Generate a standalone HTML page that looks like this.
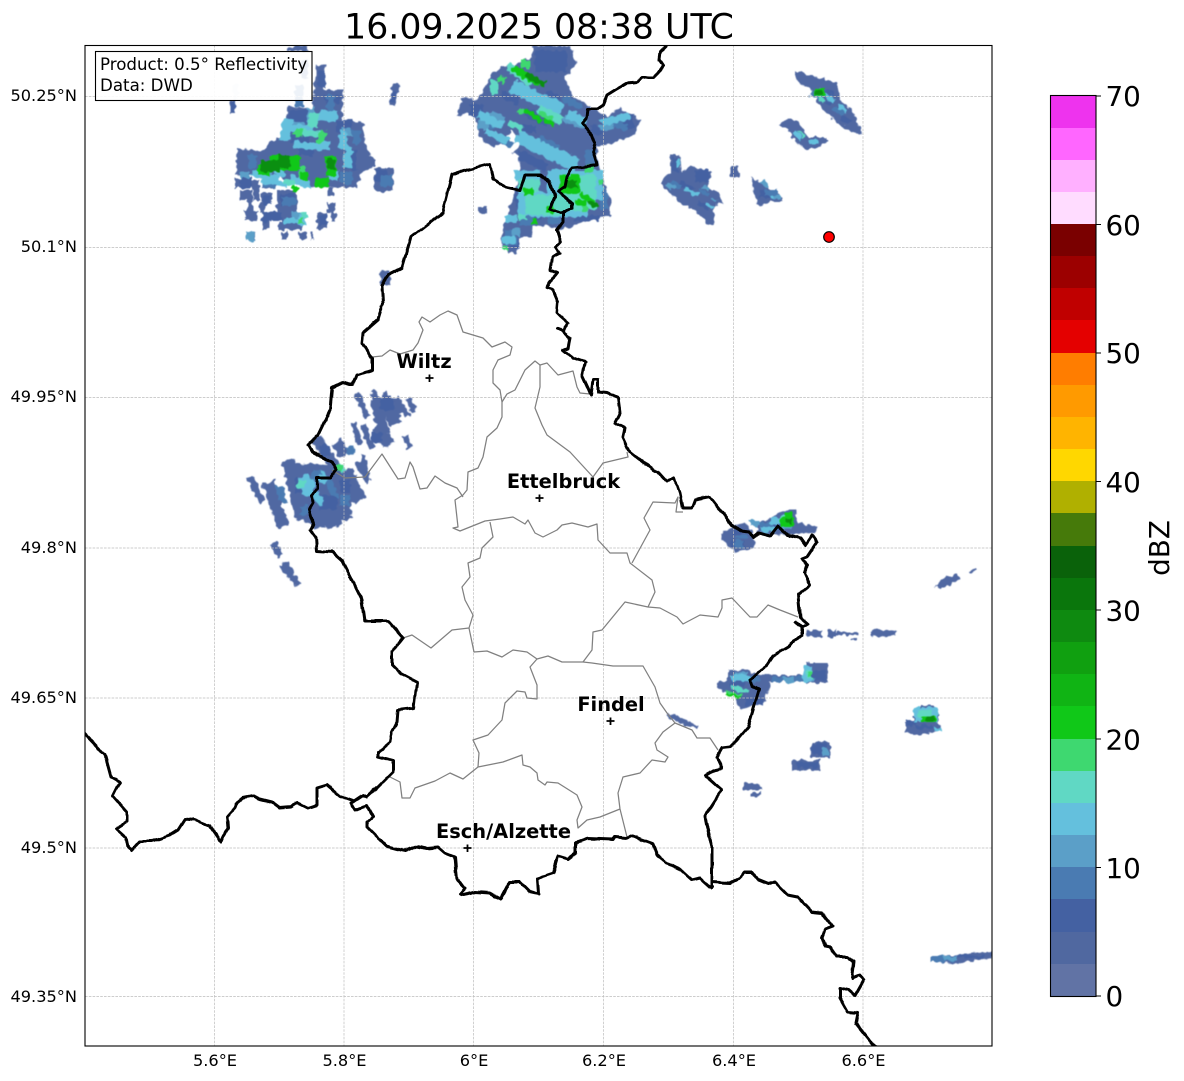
<!DOCTYPE html>
<html><head><meta charset="utf-8"><title>Radar</title>
<style>
html,body{margin:0;padding:0;background:#fff}
svg{display:block}
text{font-family:"DejaVu Sans",sans-serif;fill:#000}
.t{font-size:16.67px}
.y{font-size:16.2px}
.c{font-size:27.8px}
.b{font-size:19.4px;font-weight:bold;text-anchor:middle}
.k{fill:none;stroke:#000;stroke-width:3;stroke-linejoin:round;stroke-linecap:round}
.g{fill:none;stroke:#808080;stroke-width:1.25;stroke-linejoin:round}
.s{fill:none;stroke-linecap:butt}
</style></head><body>
<svg width="1184" height="1081" viewBox="0 0 1184 1081" xmlns="http://www.w3.org/2000/svg">
<defs><clipPath id="m"><rect x="85" y="45" width="907" height="1001"/></clipPath>
<filter id="j" filterUnits="userSpaceOnUse" x="0" y="0" width="1184" height="1081" color-interpolation-filters="sRGB">
<feTurbulence type="fractalNoise" baseFrequency="0.22" numOctaves="1" seed="4" result="n"/>
<feDisplacementMap in="SourceGraphic" in2="n" scale="7" xChannelSelector="R" yChannelSelector="G"/>
<feGaussianBlur stdDeviation="0.4"/>
</filter>
<filter id="w" filterUnits="userSpaceOnUse" x="0" y="0" width="1184" height="1081" color-interpolation-filters="sRGB">
<feTurbulence type="fractalNoise" baseFrequency="0.09" numOctaves="1" seed="7" result="n"/>
<feDisplacementMap in="SourceGraphic" in2="n" scale="4" xChannelSelector="R" yChannelSelector="G"/>
<feGaussianBlur stdDeviation="0.35"/>
</filter>
</defs>
<rect width="1184" height="1081" fill="#fff"/>
<g clip-path="url(#m)">
<!-- radar base -->
<g filter="url(#j)">
<g fill="#5068a2">
<path d="M288 46h20v5h-20zM288 107L312 108 316 65 325 66 323 90 343 90 342 120 362 122 367 150 376 160 376 166 362 172 356 188 335 188 308 186 265 172 236 176 237 148 262 152 270 142 283 135Z"/>
<path d="M235 178h10v10h-10zM240 190h12v10h-12zM252 180h7v10h-7zM253 190h7v10h-7zM262 182h13v7h-13zM262 192h10v10h-10zM248 200h5v10h-5zM245 210h12v10h-12zM260 202h5v10h-5zM262 212h8v10h-8zM263 222h5v8h-5zM272 212h10v8h-10zM277 190h20v22h-20zM282 212h22v10h-22zM278 222h24v8h-24zM282 232h5v8h-5zM299 232h7v8h-7zM311 232h2v8h-2zM317 213h10v16h-10zM327 203h8v10h-8zM331 213h5v8h-5zM328 188h5v8h-5zM375 168h18v23h-18zM380 270h10v15h-10z"/>
<path d="M393 83l7 2-5 22-6-2zM230 100h5v13h-5z"/>
<path d="M532 46L570 46 577 63 565 78 573 97 588 105 607 117 620 108 640 120 635 135 613 143 597 147 598 163 610 200 610 215 583 222 570 228 557 228 540 225 533 227 532 237 520 237 517 253 508 253 502 243 503 228 508 213 513 198 518 180 520 157 512 153 522 143 512 130 503 143 492 147 480 137 475 117 467 112 457 117 462 98 477 100 493 73 502 67 513 65 532 57Z"/>
<path d="M478 207h8v7h-8zM485 207h2v6h-2z"/>
<path d="M670 155L680 155 682 173 690 165 712 173 707 187 717 192 723 203 714 205 715 225 707 223 697 212 680 203 660 183 670 173ZM730 167h9v10h-9z"/>
<path d="M750 178L762 183 783 197 783 202 770 202 758 206 755 195Z"/>
<path d="M795 70L817 77 837 83 840 100 852 110 862 133 857 135 837 123 820 107 812 90 797 82Z"/>
<path d="M778 125L787 118 798 122 808 137 827 137 827 142 808 150 797 143 788 130Z"/>
<path d="M720 533L745 523 752 530 755 545 752 549 735 552 722 540Z"/>
<path d="M757 523L787 510 795 510 798 523 818 527 813 533 778 535 757 533Z"/>
<path d="M807 630h15v7h-15zM828 630h8v7h-8zM835 632h23v3h-23zM850 638h7v2h-7zM870 631l15-2 13 2-2 4-12 2-14-1z"/>
<path d="M728 670L745 669 760 675 770 683 765 703 740 709 735 697 717 688 717 683 728 680Z"/>
<path d="M757 675h50v7h-50zM807 663h21v20h-21z"/>
<path d="M905 722h8v-6h8v-10h12l6 8v10l3 5-10 4-18 2-9-3z"/>
<path d="M811 742h19v15h-19zM792 760h28v10h-28zM743 783h14l5 4v3h-19zM751 793h10v3h-10z"/>
<path d="M665 715L668 713 698 725 697 728 685 726Z"/>
<path d="M935 586L942 578 958 574 960 578 950 586 942 588ZM970 571l5-3 2 2-5 3z"/>
<path d="M930 957L955 955 992 951 992 958 955 964 930 961Z"/>
<path d="M285 462L340 466 362 485 352 505 322 528 304 522 290 492Z"/>
<path d="M372 396L396 398 408 412 392 416 376 420Z"/>
</g>
<g class="s" stroke="#5068a2">
<path stroke-width="7" d="M250 477L263 503M273 543L280 556M284 562L297 585"/>
<path stroke-width="3" d="M280 565L290 578"/>
<path stroke-width="12" d="M268 482L283 527M303 465L320 528"/>
<path stroke-width="13" d="M288 460L302 520"/>
<path stroke-width="16" d="M316 480L335 527M330 472L345 520M345 470L355 503"/>
<path stroke-width="11" d="M316 438L340 475M336 442L345 455"/>
<path stroke-width="6" d="M357 393L367 417M373 390L380 410M384 392L396 410M396 398L408 416M408 398L414 412M354 423L360 445M363 425L372 448M363 455L366 478M380 430L386 448M405 436L410 448M358 462L368 482M342 470L352 490M352 476L364 498"/>
<path stroke-width="12" d="M376 400L384 433M386 400L396 425M376 425L390 445"/>
</g>
<g fill="#4461a2">
<path d="M300 60h8v20h-8zM318 70h7v18h-7zM325 95h15v8h-15zM289 110h20v12h-20zM336 120h16v12h-16zM291 135h18v8h-18zM298 147h15v8h-15zM345 150h12v20h-12zM240 178h12v10h-12zM263 196h8v8h-8zM281 194h14v12h-14zM270 212h12v8h-12zM262 212h8v10h-8zM320 215h7v10h-7zM376 170h12v12h-12zM392 90l5 2-2 10-5-2zM231 102h4v10h-4z"/>
<path d="M535 50h32v22h-32zM502 90l18 9-2 7-18-9zM528 108l22 11-3 8-22-11zM520 150l28 14-3 8-28-14zM520 125h16v8h-16zM470 104h14v12h-14zM548 90l14 7-3 6-14-7zM592 124l12 6-3 6-12-6zM624 115h10v14h-10zM575 215h25v6h-25zM530 210h12v10h-12zM515 190h8v16h-8zM510 238h10v10h-10z"/>
<path d="M680 180l14 7-3 6-14-7zM695 170h14v12h-14zM700 200l10 5-3 5-10-5zM672 158h6v14h-6zM843 115l8 5-3 5-8-5zM826 90h8v14h-8zM760 190h10v8h-10z"/>
<path d="M730 540h14v8h-14zM733 528h10v6h-10zM770 524h12v7h-12zM730 680h14v6h-14zM745 698h18v7h-18zM780 677h12v5h-12zM812 670h14v10h-14zM812 744h16v10h-16zM796 762h22v6h-22zM915 725h18v4h-18zM906 720h10v6h-10z"/>
<path d="M295 478h18v16h-18zM320 495h18v15h-18zM340 480h10v12h-10zM380 398h14v12h-14zM372 432h10v10h-10zM320 445h10v12h-10z"/>
<path d="M950 955h34v3h-34z"/>
</g>
<g fill="#4a7bb2">
<path d="M295 85h8v22h-8zM327 95h8v20h-8zM248 155h8v14h-8zM262 182h14v6h-14zM282 198h14v8h-14zM340 172h12v12h-12zM380 175h12v12h-12zM248 233h8v8h-8zM352 130h8v14h-8zM303 190h8v0z"/>
<path d="M520 70l16 8-4 6-16-8zM480 118h16v10h-16zM500 135l14 7-3 6-14-7zM540 135l20 10-3 6-20-10zM565 95l18 9-3 6-18-9zM610 118l18 6-3 7-18-6zM585 150h10v14h-10zM600 190h8v20h-8zM520 215h14v10h-14zM505 230h12v15h-12zM548 212h14v12h-14z"/>
<path d="M672 180l10 5-2 4-10-5zM700 188l10 5-2 4-10-5zM765 190h12v5h-12zM812 90l10 5-3 5-10-5zM835 105l10 6-3 5-10-6zM797 130l8 6-3 4-8-6z"/>
<path d="M760 522h15v6h-15zM736 535h12v4h-12zM735 540h8v8h-8zM745 676h14v6h-14zM772 677h10v5h-10zM795 676h12v6h-12z"/>
<path d="M275 485l8 2 4 16-8-2zM325 478l8 2 6 18-8-2zM340 495h10v10h-10zM345 448l8-3 3 8-8 3zM300 505h8v10h-8zM312 470h10v12h-10z"/>
<path d="M930 956h25v6h-25z"/>
</g>
<g fill="#5b9fc8">
<path d="M290 122h14v8h-14zM307 108h8v14h-8zM342 128h10v8h-10zM262 168h10v6h-10zM246 232h9v9h-9zM292 212h10v10h-10zM240 172h10v6h-10z"/>
<path d="M478 120h10v10h-10zM492 110l14 7-3 5-14-7zM565 115l20 10-3 5-20-10zM598 125l14-2 2 6-14 2zM520 205h10v8h-10zM512 228h8v8h-8z"/>
<path d="M668 182l8 4-2 4-8-4zM712 197l6 3-2 3-6-3zM704 185l6 3-2 3-6-3zM763 180l6 6-3 2-6-6zM775 195h6v4h-6z"/>
<path d="M750 520h10v6h-10zM782 524h10v6h-10zM735 672h12v6h-12zM806 678h8v4h-8zM782 677h12v5h-12zM943 956h15v5h-15zM822 747h6v8h-6z"/>
</g>
<g fill="#64c0dd">
<path d="M285 122l30 4-2 8-30-4zM320 110l18 2-2 10-18-2zM294 140l28 4-1 7-28-4zM340 130l8 2-2 18-8-2zM345 145l8 2-2 22-8-2zM252 170l28 6-1 6-28-6zM291 175l20 5-1 8-20-5zM275 170h10v7h-10zM298 215h8v10h-8zM284 218h14v6h-14zM328 170h10v10h-10zM283 118l10 2-4 22-10-2zM312 142h18v8h-18zM262 178l26 4-1 5-26-4z"/>
<path d="M515 80l50 24-6 12-50-24zM480 110l25 12-4 8-25-12zM520 130l60 30-6 12-60-30zM515 170h25v10h-25zM570 110l18 9-4 8-18-9zM600 120l28-8 3 7-28 8zM488 128l22 10-4 6-22-10zM563 150l16 8-4 6-16-8zM518 192h70v25h-70zM548 170h55v30h-55zM505 215h12v8h-12zM503 236h12v8h-12z"/>
<path d="M676 160h4v8h-4zM820 87l16 12-3 5-16-12zM840 104l8 6-2 4-8-6zM795 130l8 8-3 3-8-8zM808 140h10v4h-10zM685 187l14 7-2 3-14-7zM708 203l6 3-2 3-6-3zM770 195h5v3h-5z"/>
<path d="M770 517h15v7h-15zM760 527h16v5h-16zM730 675h20v6h-20zM803 666h8v16h-8zM914 708h24v14h-24zM934 728h8v3h-8z"/>
<path d="M298 478l10-5 8 10-6 14-8-2zM322 470l6 8-4 8-6-6zM315 490l10 10-4 6-10-10z"/>
</g>
<g fill="#60d8c4">
<path d="M310 112l10 2-3 14-10-2zM298 128l26 4-1 7-26-4zM285 178l10 2-1 6-10-2zM300 212h8v6h-8z"/>
<path d="M510 62l24 18-5 7-24-18zM540 105l24 12-4 8-24-12zM510 120l14 7-3 5-14-7zM490 80h8v14h-8zM560 175h36v35h-36zM525 195h40v20h-40zM518 180h22v12h-22zM518 215h8v5h-8z"/>
<path d="M817 92l8 8-2 3-8-8zM800 130l6 6-2 2-6-6zM780 515h12v6h-12zM731 685l18 5-1 4-18-5zM806 670h6v8h-6zM918 710h14v7h-14z"/>
<path d="M298 478l8 3-2 8-8-3zM340 464l6 5-3 5-5-5z"/>
</g>
<g fill="#3ed870">
<path d="M321 130l7 2-5 12-7-2zM296 128l8 2-3 7-8-2zM298 167h8v10h-8zM298 218h5v6h-5z"/>
<path d="M500 75l6 3-2 6-6-3zM520 108l5 2-2 5-5-2zM540 110l14 7-2 5-14-7zM520 60h10v8h-10zM582 205h6v6h-6zM585 165h8v8h-8zM598 180h5v5h-5zM504 245h4v5h-4z"/>
<path d="M726 690l16 4-1 3-16-4zM335 465h7v6h-7zM808 672h4v5h-4z"/>
</g>
<g fill="#10c818">
<path d="M270 155h30v15h-30zM258 165h12v10h-12zM300 172h8v8h-8zM315 178h14v9h-14zM326 156h10v20h-10zM292 186h6v6h-6z"/>
<path d="M515 65l28 16-4 6-28-16zM525 108l8 4-2 4-8-4zM545 118l10 5-2 4-10-5zM533 112l10 8-3 3-10-8zM523 187h10v8h-10zM560 175h20v18h-20zM582 192l14 10-3 4-14-10zM575 200h12v5h-12zM532 218h6v6h-6zM546 205h8v8h-8z"/>
<path d="M815 88h10v8h-10zM780 518h14v9h-14zM785 512h8v6h-8zM726 692l14 4-1 3-14-4zM922 716h14v6h-14z"/>
</g>
<g fill="#0a8f10">
<path d="M262 160h18v12h-18zM278 155h12v13h-12zM327 158h8v12h-8z"/>
<path d="M528 72l18 10-3 5-18-10zM565 180h12v8h-12zM590 200l8 5-2 3-8-5z"/>
<path d="M816 90h6v5h-6zM926 716h8v5h-8zM786 518h6v6h-6z"/>
</g>
<path d="M232 85l6-1 1 15-6 1z" fill="#dfe5f2"/>
</g>
<!-- grid -->
<g stroke="#bdbdbd" stroke-width="0.7" stroke-dasharray="2.6 1.2" fill="none">
<path d="M214.500 45V1046M344 45V1046M473.500 45V1046M603.500 45V1046M733.500 45V1046M863 45V1046"/>
<path d="M85 96.500H992M85 247.500H992M85 397.500H992M85 548H992M85 698H992M85 848H992M85 996.500H992"/>
</g>
<!-- gray regional boundaries -->
<path class="g" d="M372 357L382 356 390 350 400 354 413 350 418 343 423 330 419 322 422 317 430 322 440 315 448 311 457 315 463 332 483 338 492 347 505 342 512 347 510 355 498 360 493 370 493 383 500 390 502 402 502 417 497 428 487 437 483 457 478 468 468 472 467 490 463 495 455 500 458 527 453 528 460 531 485 521 500 519 513 517 525 524 528 520 535 533 543 537 557 530 562 525 572 523 588 527 597 524 598 540 610 553 627 553 630 563 652 580 655 592 648 607"/>
<path class="g" d="M502 402L507 394 515 390 525 370 535 361 540 365 547 363 558 375 573 371 577 387 580 393 590 394"/>
<path class="g" d="M540 365L540 387 535 408 542 425 547 435 570 452 593 477 603 463 628 457 627 452"/>
<path class="g" d="M332 470L345 478 365 477 382 454 398 479 405 478 410 462 413 467 420 489 427 488 435 476 445 483 457 488 463 497"/>
<path class="g" d="M632 563L650 530 644 518 653 502 675 503 678 497 676 512 683 512"/>
<path class="g" d="M490 522L493 537 482 548 480 558 468 563 470 577 462 587 465 600 473 615 469 628 452 630 431 648 412 635 403 638"/>
<path class="g" d="M469 628L474 652 487 651 502 657 513 650 527 652 537 659 548 656 562 662 583 662 592 663 613 666 643 666 655 687 660 703 667 713 675 723 663 732 655 743 657 750 668 757 665 762 652 760 640 773 623 777 618 793 620 809 627 837"/>
<path class="g" d="M620 809L600 817 587 820 578 828 577 820 582 807 577 795 558 783 547 782 545 785 538 780 537 773 530 767 523 765 522 755 503 762 478 767 463 779 450 773 435 781 415 788 410 798 402 798 400 782 390 777"/>
<path class="g" d="M478 767L479 753 473 740 488 735 502 720 505 703 517 691 525 692 527 698 537 699 537 685 530 667 537 659"/>
<path class="g" d="M583 662L592 650 593 632 602 630 625 602 648 607 660 608 677 617 683 624 700 615 718 617 722 608 722 600 732 598 750 617 757 617 768 605 780 610 798 617"/>
<path class="g" d="M675 723L692 730 697 738 710 738 718 750"/>
<!-- black boundaries -->
<g filter="url(#w)">
<path class="k" d="M666 46L660 52 659 60 663 66 658 73 653 78 648 78 642 77 637 82 627 83 615 90 607 95 603 105 597 109 588 109 587 117 582 123 585 128 592 135 595 143 593 152 597 165 583 167 572 168 567 177 565 187 558 192 572 203 572 208 563 212 563 222 557 230 561 242 556 247 560 253 552 257 550 270 557 273 550 282 547 288 553 290 558 302 557 313 560 316 568 323 563 332 558 328 570 338 568 348 563 350 573 358 585 362 582 375 588 388 591 395 593 380 598 380 598 392 607 393 618 398 620 413 615 423 625 428 623 437 630 452 640 460 653 470 658 472 667 482 673 478 678 487 680 493 683 508 692 508 695 500 710 497 732 525 740 531 750 532 753 537 758 533 770 536 778 526 788 535 800 538 805 545 812 535 817 542 807 557 802 559 808 565 804 572 810 585 798 595 800 617 808 624 803 627 795 622 802 628 802 635 788 647 773 656 767 665 750 680 752 686 759 690 748 727 737 740 730 747 722 748 717 757 722 768 713 770 705 775 722 790 707 813 705 817 712 847 712 888"/>
<path class="k" d="M712 882L730 883 738 879 745 872 752 872 758 880 768 884 775 882 788 895 798 897 812 912 822 913 833 927 825 930 822 938 825 946 830 947 837 957 847 957 854 962 852 978 860 975 864 980 855 996 848 990 840 988 840 998 848 1012 858 1013 856 1023 872 1043 880 1050"/>
<path class="k" d="M80 729L105 755 111 777 120 782 113 796 127 812 127 822 116 829 126 838 128 848 131 851 140 841 152 841 170 835 178 830 185 819 195 820 210 826 221 842 228 827 227 817 235 808 237 803 243 798 253 796 260 799 272 802 280 808 292 807 298 803 308 808 317 805 317 788 327 785 340 796 354 801 363 795 367 797 377 788 393 772 393 761 378 757 378 752 390 742 392 732 397 722 398 710 414 708 417 682 400 673 392 665 392 652 403 638 388 621 365 621 362 600 342 560 333 552 317 551 316 538 310 530 313 523 309 510 313 503 312 495 317 488 317 478 330 478 337 469 332 462 312 452 308 445 318 435 330 410 332 388 342 383 350 385 353 385 357 375 372 370 372 358 362 343 363 333 378 320 383 303 382 285 388 275 402 268 411 237 443 212 452 175 467 170 490 164 493 180 505 187 520 190 525 175 540 175 550 182 555 197 550 209 560 213 565 212"/>
<path class="k" d="M354 801L351 803 355 810 367 806 373 817 367 822 367 827 386 846 405 851 417 846 427 848 438 847 445 853 455 857 457 880 465 888 460 894 463 895 475 892 490 893 501 899 510 882 520 882 530 892 539 894 538 878 553 873 558 856 568 859 576 853 576 843 587 839 613 840 615 837 627 838 631 836 653 844 657 855 667 863 680 869 692 880 700 878 710 887 713 887"/>
</g>
<!-- markers -->
<g stroke="#000" stroke-width="1.8" fill="none">
<path d="M425.500 378H433.500M429.500 374.500V382M535.500 498H543.500M539.500 494.500V502M606.500 721H614.500M610.500 717.500V725M463.500 848H471.500M467.500 844.500V852"/>
</g>
<text class="b" x="424" y="368">Wiltz</text>
<text class="b" x="563.500" y="488">Ettelbruck</text>
<text class="b" x="611" y="711">Findel</text>
<text class="b" x="503.500" y="838">Esch/Alzette</text>
<circle cx="829" cy="237" r="5.300" fill="#ff0000" stroke="#000" stroke-width="1.200"/>
</g>
<!-- frame -->
<rect x="85" y="45.500" width="907" height="1000.500" fill="none" stroke="#000" stroke-width="1.100"/>
<!-- info box -->
<rect x="95.500" y="51.500" width="216.500" height="49" fill="#fff" fill-opacity="0.9" stroke="#000" stroke-width="1.100"/>
<text class="t" x="100" y="70">Product: 0.5° Reflectivity</text>
<text class="t" x="100" y="91">Data: DWD</text>
<!-- title -->
<text x="539" y="38.500" text-anchor="middle" style="font-size:34.72px">16.09.2025 08:38 UTC</text>
<!-- axis labels -->
<g class="y" text-anchor="end">
<text x="77" y="101">50.25°N</text>
<text x="77" y="252">50.1°N</text>
<text x="77" y="402">49.95°N</text>
<text x="77" y="553">49.8°N</text>
<text x="77" y="703">49.65°N</text>
<text x="77" y="853">49.5°N</text>
<text x="77" y="1002">49.35°N</text>
</g>
<g class="y" text-anchor="middle">
<text x="215" y="1066">5.6°E</text>
<text x="344.500" y="1066">5.8°E</text>
<text x="474" y="1066">6°E</text>
<text x="604" y="1066">6.2°E</text>
<text x="734" y="1066">6.4°E</text>
<text x="863.500" y="1066">6.6°E</text>
</g>
<!-- colorbar -->
<g>
<rect x="1051" y="96" width="45" height="33" fill="#ee33ee"/>
<rect x="1051" y="128" width="45" height="33" fill="#ff66ff"/>
<rect x="1051" y="160" width="45" height="33" fill="#ffb0ff"/>
<rect x="1051" y="192" width="45" height="33" fill="#ffdcff"/>
<rect x="1051" y="224" width="45" height="33" fill="#7a0000"/>
<rect x="1051" y="256" width="45" height="33" fill="#9c0000"/>
<rect x="1051" y="288" width="45" height="33" fill="#c00000"/>
<rect x="1051" y="320" width="45" height="33" fill="#e40000"/>
<rect x="1051" y="353" width="45" height="33" fill="#ff7d00"/>
<rect x="1051" y="385" width="45" height="33" fill="#ff9a00"/>
<rect x="1051" y="417" width="45" height="33" fill="#ffb400"/>
<rect x="1051" y="449" width="45" height="33" fill="#ffd700"/>
<rect x="1051" y="481" width="45" height="33" fill="#b0b000"/>
<rect x="1051" y="513" width="45" height="33" fill="#467a0a"/>
<rect x="1051" y="546" width="45" height="33" fill="#0a620a"/>
<rect x="1051" y="578" width="45" height="33" fill="#0a760c"/>
<rect x="1051" y="610" width="45" height="33" fill="#0e8a10"/>
<rect x="1051" y="642" width="45" height="33" fill="#10a010"/>
<rect x="1051" y="674" width="45" height="33" fill="#10b414"/>
<rect x="1051" y="706" width="45" height="33" fill="#10c818"/>
<rect x="1051" y="739" width="45" height="33" fill="#3ed870"/>
<rect x="1051" y="771" width="45" height="33" fill="#60d8c4"/>
<rect x="1051" y="803" width="45" height="33" fill="#64c0dd"/>
<rect x="1051" y="835" width="45" height="33" fill="#5b9fc8"/>
<rect x="1051" y="867" width="45" height="33" fill="#4a7bb2"/>
<rect x="1051" y="899" width="45" height="33" fill="#4461a2"/>
<rect x="1051" y="932" width="45" height="32" fill="#5068a0"/>
<rect x="1051" y="964" width="45" height="32" fill="#6173a5"/>
<rect x="1050.500" y="95.500" width="45.500" height="901" fill="none" stroke="#000" stroke-width="1.100"/>
<path d="M1096 96H1101M1096 224.500H1101M1096 353H1101M1096 481.500H1101M1096 610H1101M1096 739H1101M1096 867.500H1101M1096 996H1101" stroke="#000" stroke-width="1.100"/>
</g>
<g class="c">
<text x="1105.500" y="106">70</text>
<text x="1105.500" y="235">60</text>
<text x="1105.500" y="363">50</text>
<text x="1105.500" y="492">40</text>
<text x="1105.500" y="620.500">30</text>
<text x="1105.500" y="749.500">20</text>
<text x="1105.500" y="878">10</text>
<text x="1105.500" y="1006">0</text>
<text transform="translate(1169 548) rotate(-90)" text-anchor="middle">dBZ</text>
</g>
</svg>
</body></html>
